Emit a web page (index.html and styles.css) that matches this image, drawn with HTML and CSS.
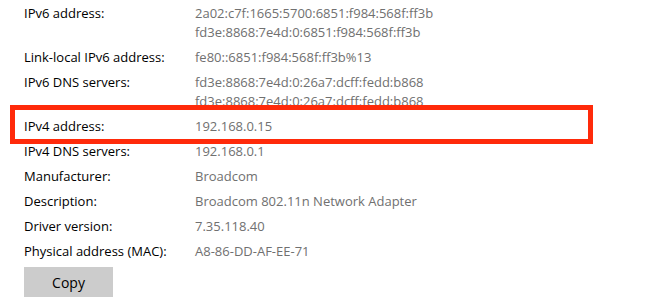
FILE: index.html
```html
<!DOCTYPE html>
<html lang="en">
<head>
  <meta charset="UTF-8">
  <title>Network properties</title>
  <link rel="stylesheet" href="styles.css">
</head>
<body>
  <!-- Properties list -->
  <div class="props">
    <div class="row">
      <div class="label">IPv6 address:</div>
      <div class="value">2a02:c7f:1665:5700:6851:f984:568f:ff3b<br>fd3e:8868:7e4d:0:6851:f984:568f:ff3b</div>
    </div>
    <div class="row">
      <div class="label">Link-local IPv6 address:</div>
      <div class="value">fe80::6851:f984:568f:ff3b%13</div>
    </div>
    <div class="row">
      <div class="label">IPv6 DNS servers:</div>
      <div class="value">fd3e:8868:7e4d:0:26a7:dcff:fedd:b868<br>fd3e:8868:7e4d:0:26a7:dcff:fedd:b868</div>
    </div>
    <div class="row highlight">
      <div class="label">IPv4 address:</div>
      <div class="value">192.168.0.15</div>
    </div>
    <div class="row">
      <div class="label">IPv4 DNS servers:</div>
      <div class="value">192.168.0.1</div>
    </div>
    <div class="row">
      <div class="label">Manufacturer:</div>
      <div class="value">Broadcom</div>
    </div>
    <div class="row">
      <div class="label">Description:</div>
      <div class="value">Broadcom 802.11n Network Adapter</div>
    </div>
    <div class="row">
      <div class="label">Driver version:</div>
      <div class="value">7.35.118.40</div>
    </div>
    <div class="row">
      <div class="label">Physical address (MAC):</div>
      <div class="value">A8-86-DD-AF-EE-71</div>
    </div>
  </div>

  <button class="copy">Copy</button>
</body>
</html>
```

FILE: styles.css
```css
body {
  font-family: 'Segoe UI', 'Open Sans', sans-serif;
  font-size: 13px;
  background-color: #ffffff;
  color: #000000;
  margin: 0;
  padding: 4px 0 0 24px;
  overflow: hidden;
}

/* Property rows */
.props {
  display: flex;
  flex-direction: column;
}

.row {
  display: flex;
  line-height: 19px;
  padding-bottom: 6px;
}

.label {
  width: 171px;
  flex-shrink: 0;
}

.value {
  color: #707070;
  white-space: nowrap;
}

/* Red box drawn over the IPv4 row */
.highlight {
  position: relative;
}

.highlight::after {
  content: '';
  position: absolute;
  left: -14px;
  top: -12px;
  width: 573px;
  height: 29px;
  border: 5px solid #ff2a0a;
}

/* Copy button */
.copy {
  font-family: inherit;
  font-size: 14px;
  width: 89px;
  height: 30px;
  border: none;
  background-color: #cccccc;
  color: #000000;
  padding: 0;
}
```
